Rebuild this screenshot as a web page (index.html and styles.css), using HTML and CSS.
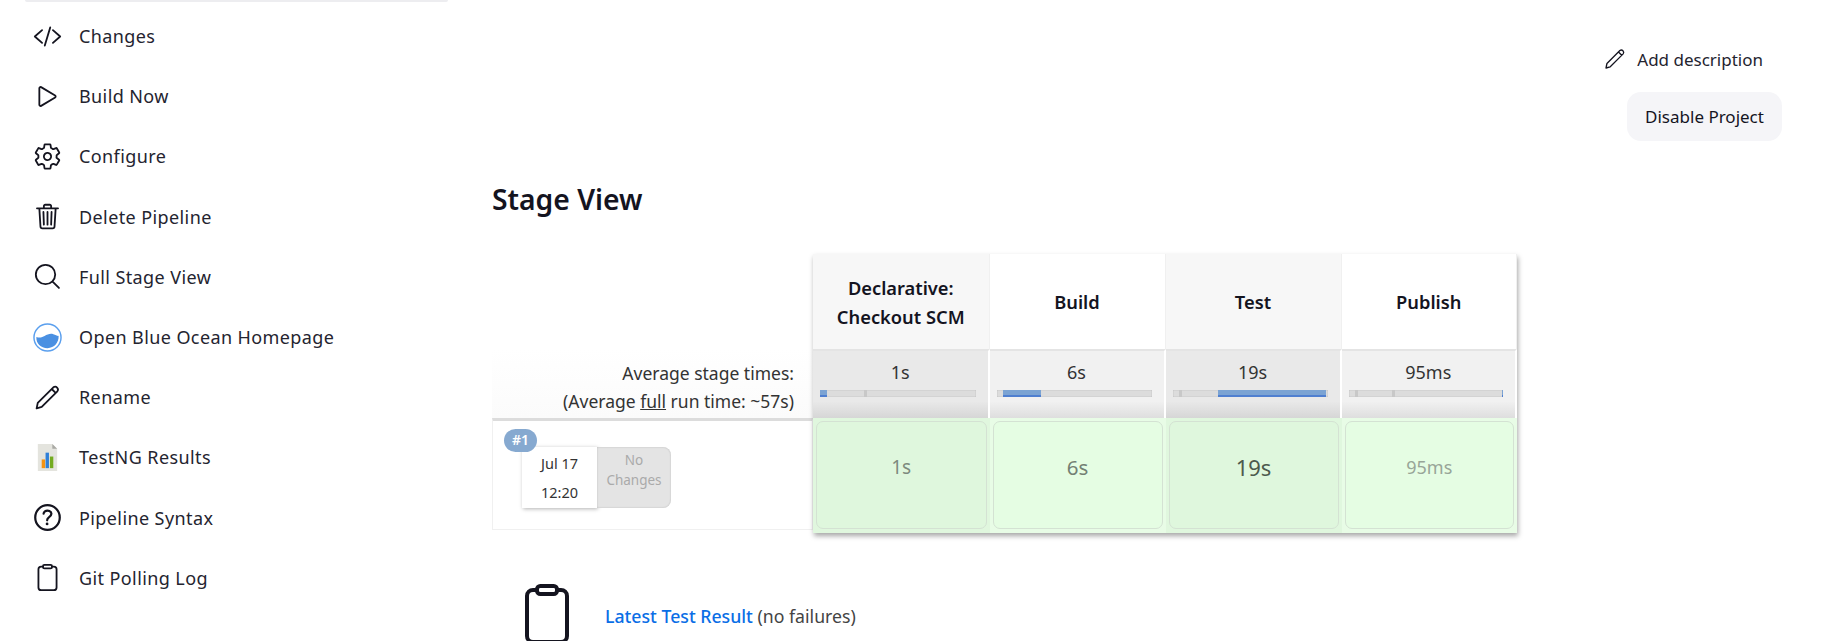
FILE: index.html
```html
<!DOCTYPE html>
<html lang="en">
<head>
  <meta charset="UTF-8" />
  <meta name="viewport" content="width=device-width, initial-scale=1.0" />
  <title>Pipeline - Stage View</title>
  <link rel="stylesheet" href="styles.css">
</head>
<body>
  <div class="page">
    <!-- Side panel -->
    <nav class="sidebar">
      <div class="sidebar-top"></div>
      <a class="task">
        <svg class="icon" viewBox="0 0 512 512"><path d="M160 368L32 256l128-112M352 368l128-112-128-112M304 96l-96 320"/></svg>
        <span>Changes</span>
      </a>
      <a class="task">
        <svg class="icon" viewBox="0 0 512 512"><path d="M112 111v290c0 17.44 17 28.52 31 20.16l247.9-148.86c12.12-7.29 12.12-25.89 0-33.18L143 90.84c-14-8.36-31 2.72-31 20.16z"/></svg>
        <span>Build Now</span>
      </a>
      <a class="task">
        <svg class="icon" viewBox="0 0 512 512"><path d="M262.29 192.31a64 64 0 1057.4 57.4 64.13 64.13 0 00-57.4-57.4zM416.39 256a154.34 154.34 0 01-1.53 20.79l45.21 35.46a10.81 10.81 0 012.45 13.75l-42.77 74a10.81 10.81 0 01-13.14 4.59l-44.9-18.08a16.11 16.11 0 00-15.17 1.75A164.48 164.48 0 01325 400.8a15.94 15.94 0 00-8.82 12.14l-6.73 47.89a11.08 11.08 0 01-10.68 9.17h-85.54a11.11 11.11 0 01-10.69-8.87l-6.72-47.82a16.07 16.07 0 00-9-12.22 155.3 155.3 0 01-21.46-12.57 16 16 0 00-15.11-1.71l-44.89 18.07a10.81 10.81 0 01-13.14-4.58l-42.77-74a10.8 10.8 0 012.45-13.75l38.21-30a16.05 16.05 0 006-14.08c-.36-4.17-.58-8.33-.58-12.5s.21-8.27.58-12.35a16 16 0 00-6.07-13.94l-38.19-30A10.81 10.81 0 0149.48 186l42.77-74a10.81 10.81 0 0113.14-4.59l44.9 18.08a16.11 16.11 0 0015.17-1.75A164.48 164.48 0 01187 111.2a15.94 15.94 0 008.82-12.14l6.73-47.89A11.08 11.08 0 01213.23 42h85.54a11.11 11.11 0 0110.69 8.87l6.72 47.82a16.07 16.07 0 009 12.22 155.3 155.3 0 0121.46 12.57 16 16 0 0015.11 1.71l44.89-18.07a10.81 10.81 0 0113.14 4.58l42.77 74a10.8 10.8 0 01-2.45 13.75l-38.21 30a16.05 16.05 0 00-6.05 14.08c.33 4.14.55 8.3.55 12.47z"/></svg>
        <span>Configure</span>
      </a>
      <a class="task">
        <svg class="icon" viewBox="0 0 512 512"><path d="M112 112l20 320c.95 18.49 14.4 32 32 32h184c17.67 0 30.87-13.51 32-32l20-320M70 112h372M192 112V72a23.93 23.93 0 0124-24h80a23.93 23.93 0 0124 24v40M256 176v224M184 176l8 224M328 176l-8 224"/></svg>
        <span>Delete Pipeline</span>
      </a>
      <a class="task">
        <svg class="icon" viewBox="0 0 512 512"><path d="M221.09 50a171 171 0 10171 171A171 171 0 00221.09 50zM346 346l112 112"/></svg>
        <span>Full Stage View</span>
      </a>
      <a class="task">
        <svg class="icon" viewBox="0 0 30 30">
          <circle class="ocean-ring" cx="15" cy="15" r="14"/>
          <path class="ocean-water" d="M3.500 14.500c3.500 1.200 6 .4 8.500-1 3-1.600 6-3 9-1.800 2.500.8 4 1.800 5.500 1.600.4 7-4.500 12.700-11.500 12.700S3 21 3.500 14.500z"/>
        </svg>
        <span>Open Blue Ocean Homepage</span>
      </a>
      <a class="task">
        <svg class="icon" viewBox="0 0 512 512"><path d="M64 448l20-96L360 76a50 50 0 0170 70L154 422zM330 106l70 70"/></svg>
        <span>Rename</span>
      </a>
      <a class="task">
        <svg class="icon icon-flat" viewBox="0 0 30 30">
          <path fill="#e4e4de" d="M5 1h15l5 5v23H5z"/>
          <path fill="#a9a9a4" d="M20 1l5 5h-5z"/>
          <rect fill="#f39314" x="9" y="17" width="3.500" height="9"/>
          <rect fill="#2f7fd8" x="13" y="10" width="3.500" height="16"/>
          <rect fill="#73ab20" x="17.500" y="14" width="3.500" height="12"/>
        </svg>
        <span>TestNG Results</span>
      </a>
      <a class="task">
        <svg class="icon" viewBox="48 48 416 416">
          <path d="M256 80a176 176 0 10176 176A176 176 0 00256 80z"/>
          <path d="M200 202.290s.84-17.500 19.570-32.570C230.680 160.770 244 158.180 256 158c10.930-.14 20.690 1.670 26.530 4.450 10 4.760 29.470 16.380 29.470 41.090 0 26-17 37.810-36.370 50.800S251 281.430 251 296"/>
          <circle class="icon-dot" cx="250" cy="348" r="20"/>
        </svg>
        <span>Pipeline Syntax</span>
      </a>
      <a class="task">
        <svg class="icon" viewBox="0 0 512 512"><path d="M336 64h32a48 48 0 0148 48v320a48 48 0 01-48 48H144a48 48 0 01-48-48V112a48 48 0 0148-48h32"/><rect x="176" y="32" width="160" height="64" rx="26"/></svg>
        <span>Git Polling Log</span>
      </a>
    </nav>

    <main class="main">
      <div class="actions">
        <a class="add-description">
          <svg class="icon-small" viewBox="0 0 512 512"><path d="M64 448l20-96L360 76a50 50 0 0170 70L154 422zM330 106l70 70"/></svg>
          <span>Add description</span>
        </a>
        <button class="disable-btn">Disable Project</button>
      </div>

      <h2 class="heading">Stage View</h2>

      <div class="stage-view">
        <div class="run-col">
          <div class="avg-label">
            <div>Average stage times:</div>
            <div>(Average <u>full</u> run time: ~57s)</div>
          </div>
          <div class="run-row">
            <div class="run-card">
              <span class="run-badge">#1</span>
              <div class="run-date">
                <div>Jul 17</div>
                <div>12:20</div>
              </div>
              <div class="run-changes">No<br>Changes</div>
            </div>
          </div>
        </div>

        <div class="stage-grid">
          <div class="stage-head odd">Declarative:<br>Checkout SCM</div>
          <div class="stage-head">Build</div>
          <div class="stage-head odd">Test</div>
          <div class="stage-head">Publish</div>

          <div class="stage-avg odd">
            <div class="avg-time">1s</div>
            <div class="bar">
              <div class="bar-fill" style="left: 0; width: 4.500%"></div>
              <div class="bar-tick" style="left: 28%"></div>
            </div>
          </div>
          <div class="stage-avg">
            <div class="avg-time">6s</div>
            <div class="bar">
              <div class="bar-fill" style="left: 4%; width: 25%"></div>
            </div>
          </div>
          <div class="stage-avg odd">
            <div class="avg-time">19s</div>
            <div class="bar">
              <div class="bar-fill" style="left: 29.500%; width: 69.500%"></div>
              <div class="bar-tick" style="left: 4%"></div>
            </div>
          </div>
          <div class="stage-avg">
            <div class="avg-time">95ms</div>
            <div class="bar">
              <div class="bar-fill" style="left: 99.400%; width: 0.600%"></div>
              <div class="bar-tick" style="left: 4%"></div>
              <div class="bar-tick" style="left: 28%"></div>
            </div>
          </div>

          <div class="stage-cell odd"><div class="cell-box size-1">1s</div></div>
          <div class="stage-cell"><div class="cell-box size-2">6s</div></div>
          <div class="stage-cell odd"><div class="cell-box size-3">19s</div></div>
          <div class="stage-cell"><div class="cell-box size-4">95ms</div></div>
        </div>
      </div>

      <div class="test-result">
        <svg class="icon-big" viewBox="0 0 512 512"><path d="M336 64h32a48 48 0 0148 48v320a48 48 0 01-48 48H144a48 48 0 01-48-48V112a48 48 0 0148-48h32"/><rect x="176" y="32" width="160" height="64" rx="26"/></svg>
        <div class="test-text"><a class="test-link">Latest Test Result</a> (no failures)</div>
      </div>
    </main>
  </div>
</body>
</html>
```

FILE: styles.css
```css
body {
  margin: 0;
  background: #fff;
  color: #14141f;
  font-family: "Noto Sans", sans-serif;
  font-size: 17.7px;
}

.page {
  display: flex;
  height: 641px;
  overflow: hidden;
}

/* side panel */
.sidebar {
  flex: 0 0 448px;
  padding-left: 25px;
  box-sizing: border-box;
}

.sidebar-top {
  height: 2px;
  margin-bottom: 4px;
  background: #ededf0;
  border-radius: 0 0 8px 8px;
}

.task {
  display: flex;
  align-items: center;
  gap: 17px;
  height: 60.2px;
  padding-left: 8px;
  color: #24242f;
  font-size: 18px;
  letter-spacing: 0.4px;
}

.icon {
  width: 29px;
  height: 29px;
  fill: none;
  stroke: #14141f;
  stroke-width: 32;
  stroke-linecap: round;
  stroke-linejoin: round;
  flex-shrink: 0;
}

.icon-flat {
  stroke: none;
}

.icon-dot {
  fill: #14141f;
  stroke: none;
}

.ocean-ring {
  stroke: #5a9fee;
  stroke-width: 1.500;
  fill: #fff;
}

.ocean-water {
  fill: #4a90e2;
  stroke: none;
}

/* main column */
.main {
  flex: 1;
  padding: 0 42px 0 44px;
}

.actions {
  display: flex;
  flex-direction: column;
  align-items: flex-end;
  padding-top: 43px;
}

.add-description {
  display: flex;
  align-items: center;
  gap: 10px;
  height: 32px;
  padding-right: 19px;
  color: #24242f;
  font-size: 17px;
}

.icon-small {
  width: 24px;
  height: 24px;
  fill: none;
  stroke: #14141f;
  stroke-width: 28;
  stroke-linecap: round;
  stroke-linejoin: round;
}

.disable-btn {
  margin-top: 17px;
  height: 49px;
  width: 155px;
  background: #f5f5f8;
  color: #14141f;
  border: 0;
  border-radius: 14px;
  font-family: inherit;
  font-size: 17px;
}

.heading {
  margin: 31px 0 28px;
  height: 54px;
  line-height: 54px;
  font-size: 28.3px;
  font-weight: 600;
}

/* stage view */
.stage-view {
  display: flex;
}

.run-col {
  flex: 0 0 321px;
  padding-top: 95px;
}

.avg-label {
  height: 69px;
  box-sizing: border-box;
  padding: 10px 19px 0 0;
  text-align: right;
  font-size: 17.5px;
  line-height: 28px;
  white-space: nowrap;
  color: #333;
  background: linear-gradient(#fff, #fbfbfb);
}

.run-row {
  height: 112px;
  box-sizing: border-box;
  border: 1px solid #f0f0f0;
  border-top: 3px solid #dcdcdc;
  padding: 26px 0 0 29px;
}

.run-card {
  position: relative;
  display: flex;
  height: 61px;
  width: 149px;
  text-align: center;
  font-size: 14.500px;
}

.run-badge {
  position: absolute;
  top: -18px;
  left: -18px;
  width: 33px;
  height: 23px;
  border-radius: 12px;
  background: #86a9d0;
  color: #fff;
  line-height: 22px;
  font-weight: 600;
  font-size: 14px;
}

.run-date {
  flex: 0 0 75px;
  background: #fff;
  box-shadow: 1px 1px 4px rgba(0, 0, 0, 0.3);
  color: #333;
  line-height: 29px;
  padding-top: 2px;
  box-sizing: border-box;
}

.run-changes {
  flex: 1;
  background: #e4e4e4;
  border-radius: 0 8px 8px 0;
  color: #aaa;
  font-size: 13.500px;
  line-height: 20px;
  padding-top: 3px;
  box-shadow: inset 0 0 2px rgba(0, 0, 0, 0.2);
}

.stage-grid {
  display: grid;
  grid-template-columns: 176.500px 176px 176px 175.500px;
  grid-template-rows: 95px 69px 115px;
  box-shadow: 1px 3px 5px rgba(0, 0, 0, 0.35);
}

.stage-head {
  display: flex;
  align-items: center;
  justify-content: center;
  text-align: center;
  line-height: 29px;
  font-size: 18.300px;
  font-weight: 600;
  background: #fff;
  border-right: 1px solid #f0f0f0;
}

.stage-head.odd {
  background: #f7f7f7;
}

.stage-avg {
  text-align: center;
  color: #333;
  background: linear-gradient(#f1f1f1 75%, #dedede);
  border-top: 2px solid #e4e4e4;
  border-right: 2px solid #fff;
  box-sizing: border-box;
}

.stage-avg.odd {
  background: linear-gradient(#e9e9e9 75%, #d6d6d6);
}

.avg-time {
  height: 39px;
  line-height: 43px;
  font-size: 18px;
}

.bar {
  position: relative;
  height: 7px;
  margin: 0 12px 0 7px;
  background: #dcdcdc;
  box-shadow: inset 0 0 1px rgba(0, 0, 0, 0.4);
}

.bar-fill {
  position: absolute;
  top: 0;
  bottom: 0;
  background: #7ba3d3;
  border-bottom: 2px solid #4f7fd0;
  box-sizing: border-box;
}

.bar-tick {
  position: absolute;
  top: 0;
  bottom: 0;
  width: 3px;
  background: #c8c8c8;
}

.stage-cell {
  padding: 3px;
  background: #e8fce6;
  box-sizing: border-box;
}

.stage-cell.odd {
  background: #e0f7de;
}

.cell-box {
  height: 108px;
  box-sizing: border-box;
  padding-top: 30px;
  line-height: 30px;
  text-align: center;
  background: #e5fde3;
  border: 1px solid #d4e2d3;
  border-radius: 7px;
}

.odd .cell-box {
  background: #dff7dd;
}

.size-1 {
  font-size: 19px;
  color: #7d8a7d;
}

.size-2 {
  font-size: 20.500px;
  color: #738073;
}

.size-3 {
  font-size: 22px;
  color: #4d5a4d;
}

.size-4 {
  font-size: 18px;
  color: #98a598;
}

/* test result row */
.test-result {
  display: flex;
  align-items: flex-start;
  margin-top: 49px;
}

.icon-big {
  width: 64px;
  height: 64px;
  margin-left: 23px;
  fill: none;
  stroke: #14141f;
  stroke-width: 32;
  stroke-linecap: round;
  stroke-linejoin: round;
  flex-shrink: 0;
}

.test-text {
  margin: 22px 0 0 26px;
  line-height: 24px;
  color: #444;
}

.test-link {
  color: #0a6ee6;
  font-weight: 500;
}
```
